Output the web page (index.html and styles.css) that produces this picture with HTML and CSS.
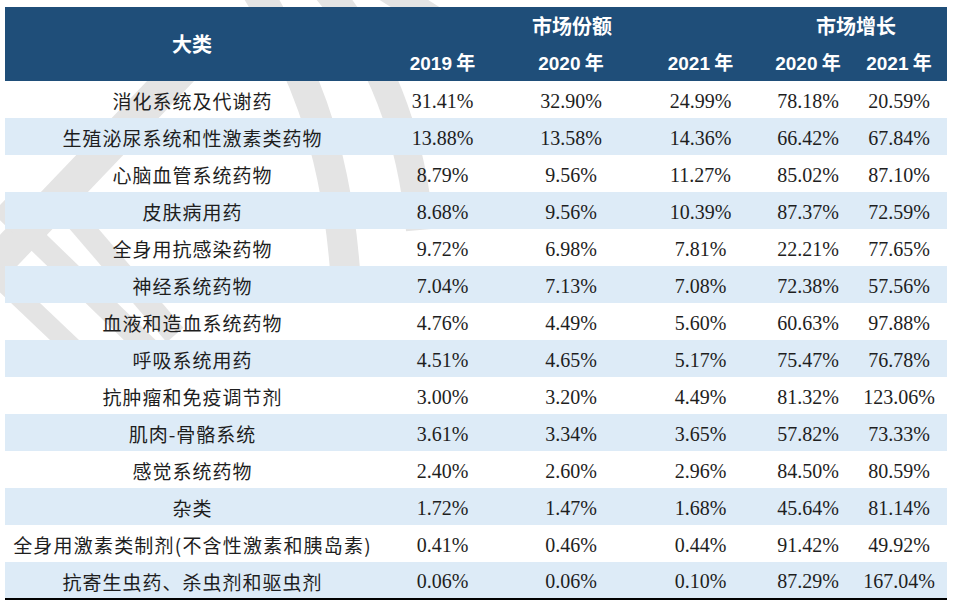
FILE: index.html
```html
<!DOCTYPE html>
<html lang="zh-CN">
<head>
<meta charset="utf-8">
<title>大类市场份额与增长</title>
<link rel="stylesheet" href="styles.css">
</head>
<body>
<div class="page">
  <svg class="watermark" width="480" height="350" viewBox="0 0 480 350" aria-hidden="true">
    <g fill="none" stroke="#E4E4E4" stroke-linecap="butt">
      <path d="M 250 -20 C 300 60, 335 140, 345 270" stroke-width="30"/>
      <path d="M 318 -20 C 372 40, 410 120, 420 230" stroke-width="28"/>
      <path d="M 385 -12 L 475 45" stroke-width="26"/>
      <path d="M -15 275 L 205 45" stroke-width="34"/>
      <path d="M 0 205 L 150 350" stroke-width="22"/>
      <path d="M 55 195 L 175 335" stroke-width="22"/>
      <path d="M -25 255 L 75 350" stroke-width="20"/>
    </g>
  </svg>
  <table class="data">
    <colgroup>
      <col class="c-name">
      <col class="c-a">
      <col class="c-b">
      <col class="c-c">
      <col class="c-d">
      <col class="c-e">
    </colgroup>
    <thead>
      <tr>
        <th rowspan="2" class="h-name">大类</th>
        <th colspan="3" class="h-group">市场份额</th>
        <th colspan="2" class="h-group">市场增长</th>
      </tr>
      <tr>
        <th class="h-year"><span class="num">2019</span> 年</th>
        <th class="h-year"><span class="num">2020</span> 年</th>
        <th class="h-year"><span class="num">2021</span> 年</th>
        <th class="h-year"><span class="num">2020</span> 年</th>
        <th class="h-year"><span class="num">2021</span> 年</th>
      </tr>
    </thead>
    <tbody>
      <tr><td class="name">消化系统及代谢药</td><td>31.41%</td><td>32.90%</td><td>24.99%</td><td>78.18%</td><td>20.59%</td></tr>
      <tr class="alt"><td class="name">生殖泌尿系统和性激素类药物</td><td>13.88%</td><td>13.58%</td><td>14.36%</td><td>66.42%</td><td>67.84%</td></tr>
      <tr><td class="name">心脑血管系统药物</td><td>8.79%</td><td>9.56%</td><td>11.27%</td><td>85.02%</td><td>87.10%</td></tr>
      <tr class="alt"><td class="name">皮肤病用药</td><td>8.68%</td><td>9.56%</td><td>10.39%</td><td>87.37%</td><td>72.59%</td></tr>
      <tr><td class="name">全身用抗感染药物</td><td>9.72%</td><td>6.98%</td><td>7.81%</td><td>22.21%</td><td>77.65%</td></tr>
      <tr class="alt"><td class="name">神经系统药物</td><td>7.04%</td><td>7.13%</td><td>7.08%</td><td>72.38%</td><td>57.56%</td></tr>
      <tr><td class="name">血液和造血系统药物</td><td>4.76%</td><td>4.49%</td><td>5.60%</td><td>60.63%</td><td>97.88%</td></tr>
      <tr class="alt"><td class="name">呼吸系统用药</td><td>4.51%</td><td>4.65%</td><td>5.17%</td><td>75.47%</td><td>76.78%</td></tr>
      <tr><td class="name">抗肿瘤和免疫调节剂</td><td>3.00%</td><td>3.20%</td><td>4.49%</td><td>81.32%</td><td>123.06%</td></tr>
      <tr class="alt"><td class="name">肌肉-骨骼系统</td><td>3.61%</td><td>3.34%</td><td>3.65%</td><td>57.82%</td><td>73.33%</td></tr>
      <tr><td class="name">感觉系统药物</td><td>2.40%</td><td>2.60%</td><td>2.96%</td><td>84.50%</td><td>80.59%</td></tr>
      <tr class="alt"><td class="name">杂类</td><td>1.72%</td><td>1.47%</td><td>1.68%</td><td>45.64%</td><td>81.14%</td></tr>
      <tr><td class="name wide">全身用激素类制剂(不含性激素和胰岛素)</td><td>0.41%</td><td>0.46%</td><td>0.44%</td><td>91.42%</td><td>49.92%</td></tr>
      <tr class="alt last"><td class="name">抗寄生虫药、杀虫剂和驱虫剂</td><td>0.06%</td><td>0.06%</td><td>0.10%</td><td>87.29%</td><td>167.04%</td></tr>
    </tbody>
  </table>
</div>
</body>
</html>
```

FILE: styles.css
```css
html, body {
  margin: 0;
  padding: 0;
  background: #ffffff;
}

.page {
  position: relative;
  width: 953px;
  height: 603px;
  padding: 7px 0 0 5px;
  box-sizing: border-box;
  overflow: hidden;
}

.watermark {
  position: absolute;
  left: 0;
  top: 0;
  z-index: 0;
}

.data {
  position: relative;
  z-index: 1;
  width: 942px;
  table-layout: fixed;
  border-collapse: collapse;
  border-spacing: 0;
  font-family: "Liberation Serif", "Noto Sans CJK SC", serif;
  color: #1e1e1e;
}

.c-name { width: 374px; }
.c-a { width: 127px; }
.c-b { width: 130px; }
.c-c { width: 129px; }
.c-d { width: 86px; }
.c-e { width: 96px; }

.data th {
  background: #1F4E79;
  color: #ffffff;
  font-family: "Noto Sans CJK SC", sans-serif;
  font-weight: 700;
  height: 37px;
  padding: 0;
  text-align: center;
  vertical-align: middle;
  line-height: 1;
}

.h-name {
  font-size: 20px;
}

.h-group {
  font-size: 20px;
}

.h-year {
  font-size: 19px;
}

.h-year .num {
  font-family: "Liberation Sans", sans-serif;
  font-weight: 700;
}

.data td {
  height: 37px;
  padding: 2px 0 0 0;
  box-sizing: border-box;
  text-align: center;
  vertical-align: middle;
  font-size: 20px;
  line-height: 1;
  white-space: nowrap;
}

.data td.name {
  font-family: "Noto Sans CJK SC", sans-serif;
  font-size: 19px;
  letter-spacing: 1px;
  padding-left: 1px;
}

.data td.wide {
  letter-spacing: 1.2px;
}

.data tr.alt td {
  background: #DDEBF7;
}

.data tr.last td {
  border-bottom: 2px solid #000000;
}
```
